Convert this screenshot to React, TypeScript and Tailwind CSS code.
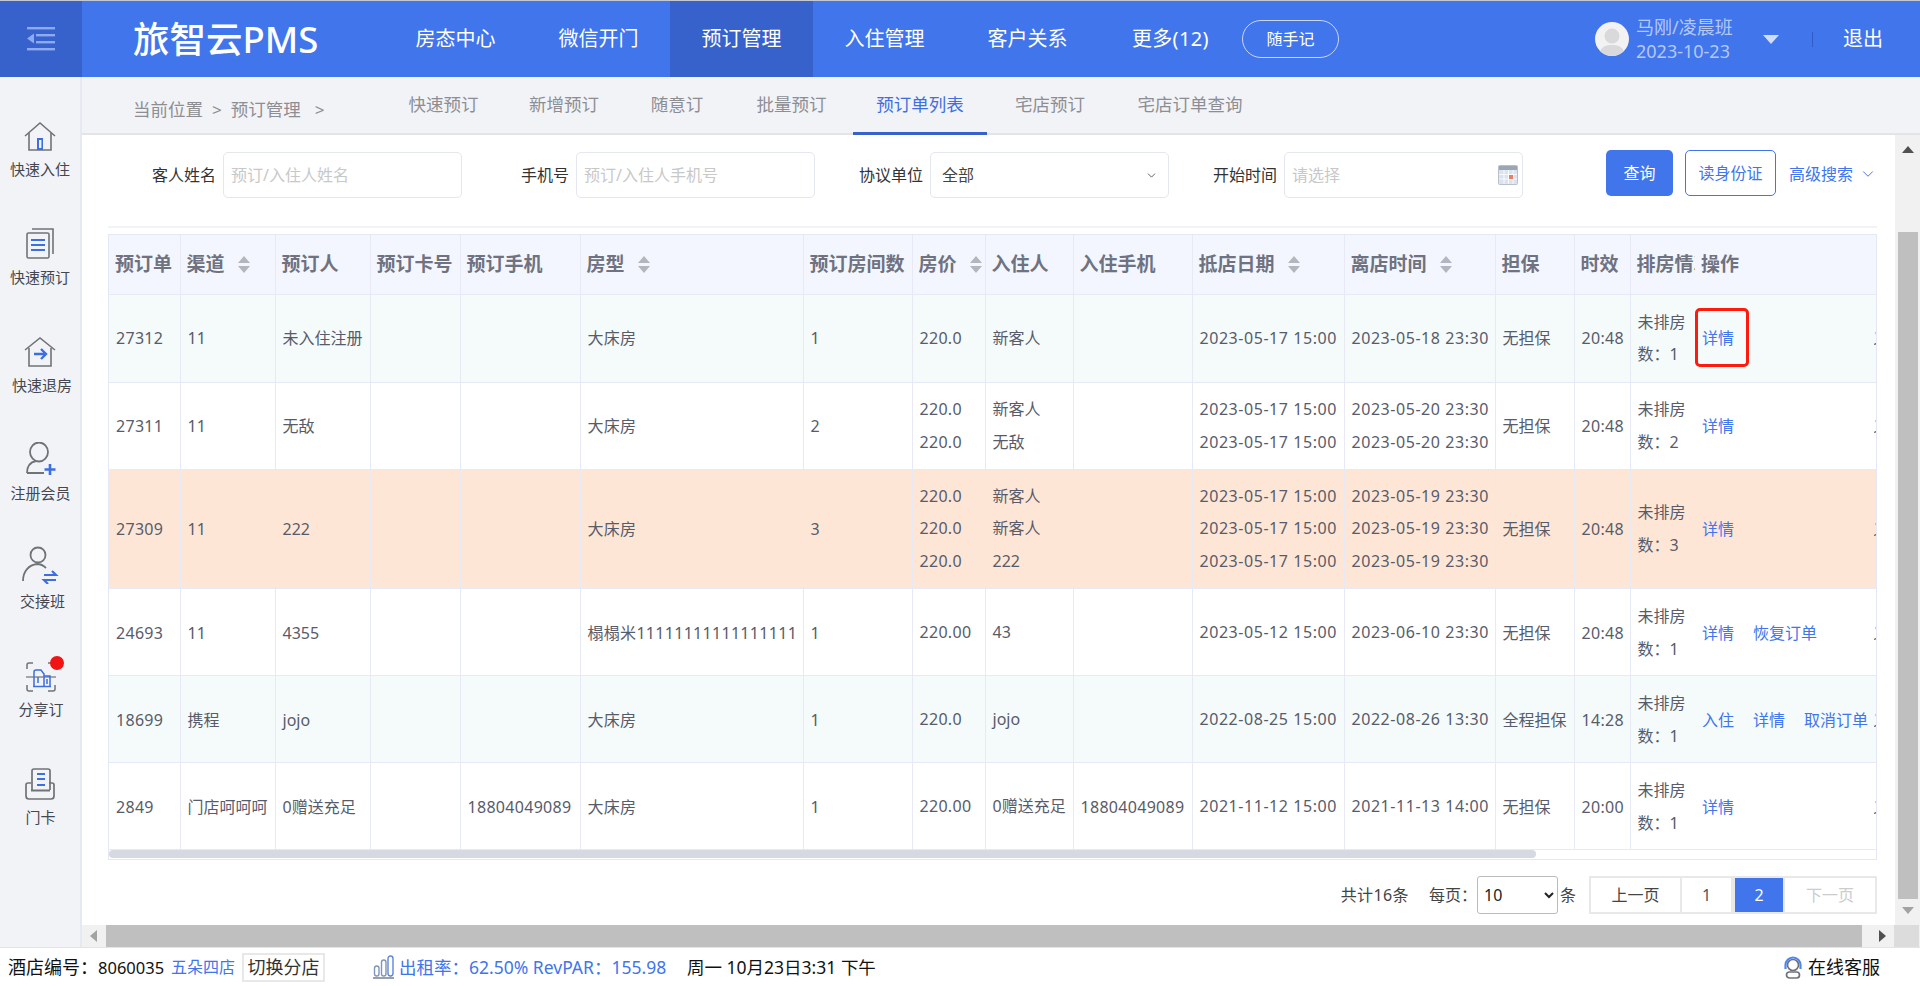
import type { ReactNode } from "react";
import { ChevronDown } from "lucide-react";

const GRAY = "#6f7378";
const BLUE = "#3d6fe0";

const NAV = ["房态中心", "微信开门", "预订管理", "入住管理", "客户关系"];
const TABS = [
  { label: "快速预订", w: "w-[121px]" },
  { label: "新增预订", w: "w-[120px]" },
  { label: "随意订", w: "w-[106px]" },
  { label: "批量预订", w: "w-[123px]" },
  { label: "预订单列表", w: "w-[134px]", active: true },
  { label: "宅店预订", w: "w-[126px]" },
  { label: "宅店订单查询", w: "w-[154px]" },
];

const SIDE: { label: string; dx?: string; icon: ReactNode; dot?: boolean }[] = [
  {
    label: "快速入住",
    icon: (
      <svg viewBox="0 0 34 34" className="h-[34px] w-[34px]" fill="none" stroke={GRAY} strokeWidth="1.6">
        <path d="M2 18 17 5l15 13" />
        <path d="M6 15v17h22V15" />
        <rect x="14" y="20" width="6" height="12" fill={BLUE} stroke="none" />
        <rect x="16" y="22" width="2.4" height="8" fill="#f2f3f7" stroke="none" />
      </svg>
    ),
  },
  {
    label: "快速预订",
    icon: (
      <svg viewBox="0 0 34 34" className="h-[34px] w-[34px]" fill="none" stroke={GRAY} strokeWidth="1.6">
        <path d="M9 3h21v25" />
        <rect x="4" y="7" width="22" height="25" rx="1.5" />
        <path d="M8 14h14M8 19h14M8 24h14" stroke={BLUE} strokeWidth="2.2" />
      </svg>
    ),
  },
  {
    label: "快速退房",
    dx: "pl-[4px]",
    icon: (
      <svg viewBox="0 0 34 34" className="h-[34px] w-[34px]" fill="none" stroke={GRAY} strokeWidth="1.6">
        <path d="M2 16 17 4l15 12" />
        <path d="M6 14v18h22V14" />
        <path d="M11 20h11M18 15l5 5-5 5" stroke={BLUE} strokeWidth="2.4" />
      </svg>
    ),
  },
  {
    label: "注册会员",
    dx: "pl-[1px]",
    icon: (
      <svg viewBox="0 0 34 34" className="h-[34px] w-[34px]" fill="none" stroke={GRAY} strokeWidth="1.8">
        <ellipse cx="16" cy="10" rx="9" ry="9.5" />
        <path d="M4 31c0-7 4-11 9-12M4 31h17" />
        <path d="M27 22v11M21.5 27.5h11" stroke={BLUE} strokeWidth="2.6" />
      </svg>
    ),
  },
  {
    label: "交接班",
    dx: "pl-[5px]",
    icon: (
      <svg viewBox="0 0 38 38" className="h-[38px] w-[38px]" fill="none" stroke={GRAY} strokeWidth="1.8">
        <circle cx="17" cy="9" r="7.5" />
        <path d="M2 35c0-10 6-16 14-17 3 0 6 1 9 4" />
        <path d="M23 29h12l-4-4M35 34H23l4 4" stroke={BLUE} strokeWidth="2.2" />
      </svg>
    ),
  },
  {
    label: "分享订",
    dx: "pl-[2px]",
    dot: true,
    icon: (
      <svg viewBox="0 0 34 34" className="h-[34px] w-[34px]" fill="none" stroke={GRAY} strokeWidth="1.5">
        <path d="M4 11V7a2 2 0 0 1 2-2h4M25 5h5a2 2 0 0 1 2 2v4M4 27v4a2 2 0 0 0 2 2h4M25 33h5a2 2 0 0 0 2-2v-4" />
        <path d="M3 19h30" strokeWidth="1.2" />
        <path d="M11 28V14a2 2 0 0 1 2-2h5l3 4v12M21 18h6v10M15 19v6M24 21v5M10 28.5h18" stroke={BLUE} strokeWidth="1.5" />
      </svg>
    ),
  },
  {
    label: "门卡",
    dx: "pl-[1px]",
    icon: (
      <svg viewBox="0 0 34 34" className="h-[34px] w-[34px]" fill="none" stroke={GRAY} strokeWidth="1.7">
        <path d="M9 24V5a2 2 0 0 1 2-2h14a2 2 0 0 1 2 2v19" />
        <path d="M8 17H5a2 2 0 0 0-2 2v11a3 3 0 0 0 3 3h22a3 3 0 0 0 3-3V19a2 2 0 0 0-2-2h-3" />
        <path d="M8 24.5h19" strokeWidth="2" />
        <path d="M14 8h8M14 13h8M14 19h8" stroke={BLUE} strokeWidth="1.8" />
      </svg>
    ),
  },
];

const COLS = [71, 95, 95, 90, 120, 223, 109, 73, 88, 119, 152, 151, 79, 56, 65, 179, 2];
const HEAD: { t: string; sort?: boolean }[] = [
  { t: "预订单" },
  { t: "渠道", sort: true },
  { t: "预订人" },
  { t: "预订卡号" },
  { t: "预订手机" },
  { t: "房型", sort: true },
  { t: "预订房间数" },
  { t: "房价", sort: true },
  { t: "入住人" },
  { t: "入住手机" },
  { t: "抵店日期", sort: true },
  { t: "离店时间", sort: true },
  { t: "担保" },
  { t: "时效" },
  { t: "排房情况" },
  { t: "操作" },
  { t: "目" },
];

type Row = {
  h: string;
  bg: string;
  id: string;
  ch: string;
  who: string;
  phone?: string;
  type: string;
  n: string;
  price: string[];
  guest: string[];
  gphone?: string;
  from: string[];
  to: string[];
  safe: string;
  time: string;
  left: string;
  ops: string[];
  mark?: boolean;
};

const ROWS: Row[] = [
  { h: "h-[88px]", bg: "bg-[#f5fafa]", id: "27312", ch: "11", who: "未入住注册", type: "大床房", n: "1", price: ["220.0"], guest: ["新客人"], from: ["2023-05-17 15:00"], to: ["2023-05-18 23:30"], safe: "无担保", time: "20:48", left: "1", ops: ["详情"], mark: true },
  { h: "h-[87px]", bg: "bg-white", id: "27311", ch: "11", who: "无敌", type: "大床房", n: "2", price: ["220.0", "220.0"], guest: ["新客人", "无敌"], from: ["2023-05-17 15:00", "2023-05-17 15:00"], to: ["2023-05-20 23:30", "2023-05-20 23:30"], safe: "无担保", time: "20:48", left: "2", ops: ["详情"] },
  { h: "h-[119px]", bg: "bg-[#fee6d6]", id: "27309", ch: "11", who: "222", type: "大床房", n: "3", price: ["220.0", "220.0", "220.0"], guest: ["新客人", "新客人", "222"], from: ["2023-05-17 15:00", "2023-05-17 15:00", "2023-05-17 15:00"], to: ["2023-05-19 23:30", "2023-05-19 23:30", "2023-05-19 23:30"], safe: "无担保", time: "20:48", left: "3", ops: ["详情"] },
  { h: "h-[87px] [&>td]:pt-[2px]", bg: "bg-white", id: "24693", ch: "11", who: "4355", type: "榻榻米11111111111111111", n: "1", price: ["220.00"], guest: ["43"], from: ["2023-05-12 15:00"], to: ["2023-06-10 23:30"], safe: "无担保", time: "20:48", left: "1", ops: ["详情", "恢复订单"] },
  { h: "h-[87px] [&>td]:pt-[2px]", bg: "bg-[#f5fafa]", id: "18699", ch: "携程", who: "jojo", type: "大床房", n: "1", price: ["220.0"], guest: ["jojo"], from: ["2022-08-25 15:00"], to: ["2022-08-26 13:30"], safe: "全程担保", time: "14:28", left: "1", ops: ["入住", "详情", "取消订单"] },
  { h: "h-[87px] [&>td]:pt-[2px]", bg: "bg-white", id: "2849", ch: "门店呵呵呵", who: "0赠送充足", phone: "18804049089", type: "大床房", n: "1", price: ["220.00"], guest: ["0赠送充足"], gphone: "18804049089", from: ["2021-11-12 15:00"], to: ["2021-11-13 14:00"], safe: "无担保", time: "20:00", left: "1", ops: ["详情"] },
];

function Sort() {
  return (
    <svg viewBox="0 0 12 17" className="ml-[13px] inline-block h-[17px] w-[12px] shrink-0" fill="#b4b6be">
      <path d="M6 0l6 7H0zM0 10h12l-6 7z" />
    </svg>
  );
}

function Cell({ children, last, num }: { children?: ReactNode; last?: boolean; num?: string }) {
  return (
    <td className={"overflow-hidden whitespace-nowrap border-b border-[#e7eaf5] px-[7px] align-middle " + (last ? "" : "border-r ") + (num ?? "")}>
      {children}
    </td>
  );
}

function Lines({ items }: { items: string[] }) {
  return (
    <>
      {items.map((t, i) => (
        <div key={i} className="leading-[32.5px]">
          {t}
        </div>
      ))}
    </>
  );
}

function Field({ label, lw, children }: { label: string; lw: string; children: ReactNode }) {
  return (
    <div className="flex items-center">
      <span className={"mr-[7px] text-right text-[16px] text-[#333] " + lw}>{label}</span>
      {children}
    </div>
  );
}

function TextBox({ placeholder, children }: { placeholder: string; children?: ReactNode }) {
  return (
    <div className="flex h-[46px] w-[239px] items-center justify-between rounded-[5px] border border-[#e4e6f0] bg-white pl-[7px] pr-[4px] text-[16px] text-[#c8c8c8]">
      {placeholder}
      {children}
    </div>
  );
}

function PageBtn({ children, cls }: { children: ReactNode; cls: string }) {
  return <div className={"flex h-[38px] items-center justify-center border-2 border-[#e8e8e8] text-[16px] " + cls}>{children}</div>;
}

export default function App() {
  const digits = "tracking-[0.3px]";
  const dates = "tracking-[0.55px]";
  return (
    <div className="flex h-[986px] w-[1920px] flex-col overflow-hidden bg-white [font-family:'Noto_Sans','Noto_Sans_CJK_SC',sans-serif]">
      <div className="h-px shrink-0 bg-[#c4c8d2]" />

      {/* top bar */}
      <header className="flex h-[76px] shrink-0 items-center bg-[#4175ec] text-white">
        <div className="flex h-full w-[82px] items-center justify-center bg-[#3762cb]">
          <svg viewBox="0 0 28 24" className="h-[24px] w-[28px]" fill="#8eaaf0">
            <rect x="0" y="0" width="28" height="2.4" />
            <rect x="9" y="7" width="19" height="2.4" />
            <rect x="9" y="14" width="19" height="2.4" />
            <rect x="0" y="21" width="28" height="2.4" />
            <path d="M7 6.5v10L0 11.5z" />
          </svg>
        </div>
        <div className="w-[302px] whitespace-nowrap pl-[51px] text-[36.5px] font-medium leading-none">旅智云PMS</div>
        <nav className="flex h-full items-center">
          {NAV.map((n) => (
            <div
              key={n}
              className={"flex h-full w-[143px] items-center justify-center text-[20px] " + (n === "预订管理" ? "bg-[#3762cb]" : "")}
            >
              {n}
            </div>
          ))}
          <div className="w-[143px] pl-[33px] text-[20px] tracking-[0.3px]">更多(12)</div>
        </nav>
        <div className="flex h-[38px] w-[97px] items-center justify-center rounded-full border border-[#c9d7f8] text-[16px]">
          随手记
        </div>
        <div className="ml-[256px] flex h-[34px] w-[34px] items-end justify-center overflow-hidden rounded-full bg-[#f2f2f2]">
          <svg viewBox="0 0 34 34" className="h-[34px] w-[34px]" fill="#d9d9dc">
            <circle cx="17" cy="14" r="7.5" />
            <path d="M4 34c1-9 6-11 13-11s12 2 13 11z" />
          </svg>
        </div>
        <div className="ml-[7px] w-[127px] text-[#b4c8f6]">
          <div className="text-[18px] leading-[24px]">马刚/凌晨班</div>
          <div className="text-[18px] leading-[24px]">2023-10-23</div>
        </div>
        <svg viewBox="0 0 16 9" className="h-[9px] w-[16px]" fill="#cfdcfa">
          <path d="M0 0h16L8 9z" />
        </svg>
        <div className="ml-[33px] h-[15px] w-px bg-[#2f5cc4]" />
        <div className="ml-[30px] text-[20px]">退出</div>
      </header>

      <div className="flex min-h-0 flex-1">
        {/* left rail */}
        <aside className="w-[82px] shrink-0 border-r-2 border-[#e6e8f2] bg-[#f2f3f7] pt-[36px]">
          {SIDE.map((s) => (
            <div key={s.label} className="flex h-[108px] flex-col items-center">
              <div className="relative flex h-[46px] items-end pb-[7px]">
                {s.icon}
                {s.dot && <span className="absolute top-[3px] right-[-7px] h-[14px] w-[14px] rounded-full bg-[#f01414]" />}
              </div>
              <div className={"text-[15px] leading-[20px] text-[#44474f] " + (s.dx ?? "")}>{s.label}</div>
            </div>
          ))}
        </aside>

        <div className="flex min-w-0 flex-1 flex-col">
          {/* breadcrumb and tabs */}
          <div className="flex h-[58px] shrink-0 items-stretch border-b-2 border-[#e3e4e8] bg-[#f2f3f7] text-[17.5px] text-[#8d8e93]">
            <div className="flex w-[301px] items-center pl-[51px] pt-[9px]">
              <span>当前位置</span>
              <span className="ml-[9px] text-[17px]">&gt;</span>
              <span className="ml-[9px]">预订管理</span>
              <span className="ml-[14px] text-[17px]">&gt;</span>
            </div>
            {TABS.map((t) => (
              <div
                key={t.label}
                className={
                  "-mb-[2px] flex items-center justify-center " +
                  t.w +
                  (t.active ? " border-b-[3px] border-[#3762cb] text-[#3d6fe0]" : " border-b-[3px] border-transparent")
                }
              >
                {t.label}
              </div>
            ))}
          </div>

          <div className="flex min-h-0 flex-1">
            <main className="min-w-0 flex-1 pl-[26px] pr-[18px]">
              {/* filters */}
              <div className="flex items-start pt-[17px]">
                <Field label="客人姓名" lw="w-[108px]">
                  <TextBox placeholder="预订/入住人姓名" />
                </Field>
                <Field label="手机号" lw="w-[107px]">
                  <TextBox placeholder="预订/入住人手机号" />
                </Field>
                <Field label="协议单位" lw="w-[108px]">
                  <div className="flex h-[46px] w-[239px] items-center justify-between rounded-[5px] border border-[#e4e6f0] pl-[11px] pr-[10px] text-[16px] text-[#444]">
                    全部
                    <ChevronDown size={13} strokeWidth={1.7} color="#555" />
                  </div>
                </Field>
                <Field label="开始时间" lw="w-[108px]">
                  <TextBox placeholder="请选择">
                    <svg viewBox="0 0 20 20" className="h-[20px] w-[20px]">
                      <rect x="0.5" y="0.5" width="19" height="19" rx="1" fill="#dbe3ee" stroke="#b8c0cc" />
                      <rect x="1" y="1" width="18" height="4" fill="#9aa6b6" />
                      <path d="M1 9.5h18M1 14h18M6 5v14M10.5 5v14M15 5v14" stroke="#fff" strokeWidth="0.8" />
                      <rect x="11" y="10" width="4" height="4" fill="#e98066" />
                    </svg>
                  </TextBox>
                </Field>
                <div className="-mt-[2px] ml-[83px] flex h-[46px] w-[67px] shrink-0 items-center justify-center rounded-[5px] bg-[#4175ec] text-[16px] text-white">
                  查询
                </div>
                <div className="-mt-[2px] ml-[12px] flex h-[46px] w-[91px] shrink-0 items-center justify-center rounded-[5px] border border-[#4175ec] text-[16px] text-[#4175ec]">
                  读身份证
                </div>
                <div className="-mt-[1px] ml-[13px] flex h-[46px] shrink-0 items-center whitespace-nowrap text-[16px] text-[#4175ec]">
                  高级搜索
                  <ChevronDown size={18} strokeWidth={1.3} className="ml-[6px]" />
                </div>
              </div>

              <div className="mt-[28px] h-[2px] bg-[#f2f3f8]" />

              {/* order table */}
              <div className="mt-[6px] h-[626px] w-[1769px] overflow-hidden border border-[#e4e8f4]">
                <table className="w-[1767px] table-fixed border-collapse text-[16px] text-[#585c6a]">
                  <colgroup>
                    {COLS.map((w, i) => (
                      <col key={i} style={{ width: w }} />
                    ))}
                  </colgroup>
                  <thead>
                    <tr className="h-[59px] bg-[#f3f6fe]">
                      {HEAD.map((c, i) => (
                        <th
                          key={i}
                          className={
                            "overflow-hidden whitespace-nowrap border-b border-[#e7eaf5] text-left text-[19px] font-bold text-[#6f7280] " +
                            (i === 16 ? "" : "px-[6px] ") +
                            (i >= 14 ? "" : "border-r")
                          }
                        >
                          <span className="flex items-center">
                            {c.t}
                            {c.sort && <Sort />}
                          </span>
                        </th>
                      ))}
                    </tr>
                  </thead>
                  <tbody>
                    {ROWS.map((r) => (
                      <tr key={r.id} className={r.h + " " + r.bg}>
                        <Cell num={digits}>{r.id}</Cell>
                        <Cell>{r.ch}</Cell>
                        <Cell>{r.who}</Cell>
                        <Cell />
                        <Cell num={digits}>{r.phone}</Cell>
                        <Cell num={digits}>{r.type}</Cell>
                        <Cell>{r.n}</Cell>
                        <Cell num={digits}><Lines items={r.price} /></Cell>
                        <Cell><Lines items={r.guest} /></Cell>
                        <Cell num={digits}>{r.gphone}</Cell>
                        <Cell num={dates}><Lines items={r.from} /></Cell>
                        <Cell num={dates}><Lines items={r.to} /></Cell>
                        <Cell>{r.safe}</Cell>
                        <Cell num={digits}>{r.time}</Cell>
                        <Cell last>
                          <div className="leading-[32.5px]">未排房</div>
                          <div className="leading-[32.5px]">数：{r.left}</div>
                        </Cell>
                        <td className="relative border-b border-[#e7eaf5] pl-[7px]">
                          <div className="flex gap-[19px] whitespace-nowrap text-[#4175ec]">
                            {r.ops.map((o) => (
                              <span key={o}>{o}</span>
                            ))}
                          </div>
                          {r.mark && (
                            <div className="absolute left-0 top-[13px] h-[59px] w-[54px] rounded-[5px] border-[3px] border-[#ff1a0e]" />
                          )}
                        </td>
                        <td className="overflow-hidden whitespace-nowrap border-b border-[#e7eaf5] text-[#585c6a]">
                          <div className="-ml-[1px]">义</div>
                        </td>
                      </tr>
                    ))}
                  </tbody>
                </table>
                <div className="h-[8px] w-[1767px]">
                  <div className="h-full w-[1427px] rounded-full bg-[#d6d9e2]" />
                </div>
              </div>

              {/* pagination */}
              <div className="mt-[16px] flex w-[1769px] items-center justify-end text-[16px] text-[#444]">
                <span className="tracking-[0.4px]">共计16条</span>
                <span className="ml-[20px] w-[39px] whitespace-nowrap">每页：</span>
                <select
                  defaultValue="10"
                  className="ml-[9px] h-[38px] w-[81px] rounded-[3px] border border-[#bbb] bg-white pl-[2px] text-[16px] text-[#222]"
                >
                  <option value="10">10</option>
                  <option value="20">20</option>
                </select>
                <span className="ml-[2px] mr-[13px]">条</span>
                <PageBtn cls="w-[93px] text-[#444]">上一页</PageBtn>
                <PageBtn cls="w-[51px] border-l-0 text-[#555]">1</PageBtn>
                <PageBtn cls="w-[52px] border-[#4175ec] bg-[#4175ec] text-white">2</PageBtn>
                <PageBtn cls="w-[92px] border-l-0 text-[#ccc]">下一页</PageBtn>
              </div>
            </main>

            {/* vertical scrollbar */}
            <div className="flex w-[25px] shrink-0 flex-col items-center bg-[#f1f1f1]">
              <svg viewBox="0 0 12 7" className="mt-[11px] h-[7px] w-[12px]" fill="#505050">
                <path d="M6 0l6 7H0z" />
              </svg>
              <div className="mt-[79px] h-[667px] w-[20px] bg-[#bfbfbf]" />
              <svg viewBox="0 0 12 7" className="mt-[8px] h-[7px] w-[12px]" fill="#a3a3a3">
                <path d="M0 0h12L6 7z" />
              </svg>
            </div>
          </div>

          {/* horizontal scrollbar */}
          <div className="flex h-[22px] shrink-0 items-center bg-[#f1f1f1]">
            <svg viewBox="0 0 7 12" className="ml-[8px] h-[12px] w-[7px]" fill="#a3a3a3">
              <path d="M7 0v12L0 6z" />
            </svg>
            <div className="ml-[9px] h-[22px] w-[1756px] bg-[#bfbfbf]" />
            <svg viewBox="0 0 7 12" className="ml-[17px] h-[12px] w-[7px]" fill="#505050">
              <path d="M0 0v12l7-6z" />
            </svg>
            <div className="ml-[8px] h-[22px] w-[25px] bg-[#dcdcdc]" />
          </div>
        </div>
      </div>

      {/* status bar */}
      <footer className="flex h-[39px] shrink-0 items-center border-t border-[#e4e4e4] text-[17.5px] text-[#111]">
        <span className="ml-[8px] w-[163px] whitespace-nowrap text-[18px]">
          酒店编号：<span className="text-[16.5px]">8060035</span>
        </span>
        <span className="text-[16px] text-[#4175ec]">五朵四店</span>
        <span className="ml-[7px] flex h-[29px] w-[83px] items-center justify-center border-2 border-[#e8e8e8] text-[18px] text-[#333]">切换分店</span>
        <svg viewBox="0 0 22 24" className="ml-[48px] h-[24px] w-[22px]" fill="none" stroke="#7f95bb" strokeWidth="1.4">
          <rect x="1.5" y="11" width="4.5" height="10" rx="2.2" />
          <rect x="8.5" y="5" width="4.5" height="16" rx="2.2" />
          <rect x="15" y="1" width="5" height="20" rx="2.4" stroke="#5f86d8" />
          <path d="M0 23h21" strokeWidth="2" stroke="#9aa0aa" />
        </svg>
        <span className="ml-[4px] w-[288px] whitespace-nowrap text-[#4175ec]">出租率：62.50% RevPAR：155.98</span>
        <span className="whitespace-nowrap">周一 10月23日3:31 下午</span>
        <span className="ml-auto flex items-center pr-[40px]">
          <svg viewBox="0 0 20 23" className="mr-[5px] h-[23px] w-[20px]" fill="none" stroke={GRAY} strokeWidth="1.7">
            <circle cx="10" cy="9" r="5.5" />
            <path d="M2.5 13V9a7.5 7.5 0 0 1 15 0v4" stroke="#4d86ee" strokeWidth="2.2" />
            <rect x="3.5" y="16" width="13" height="6" rx="3" />
          </svg>
          <span className="text-[18px]">在线客服</span>
        </span>
      </footer>
    </div>
  );
}
